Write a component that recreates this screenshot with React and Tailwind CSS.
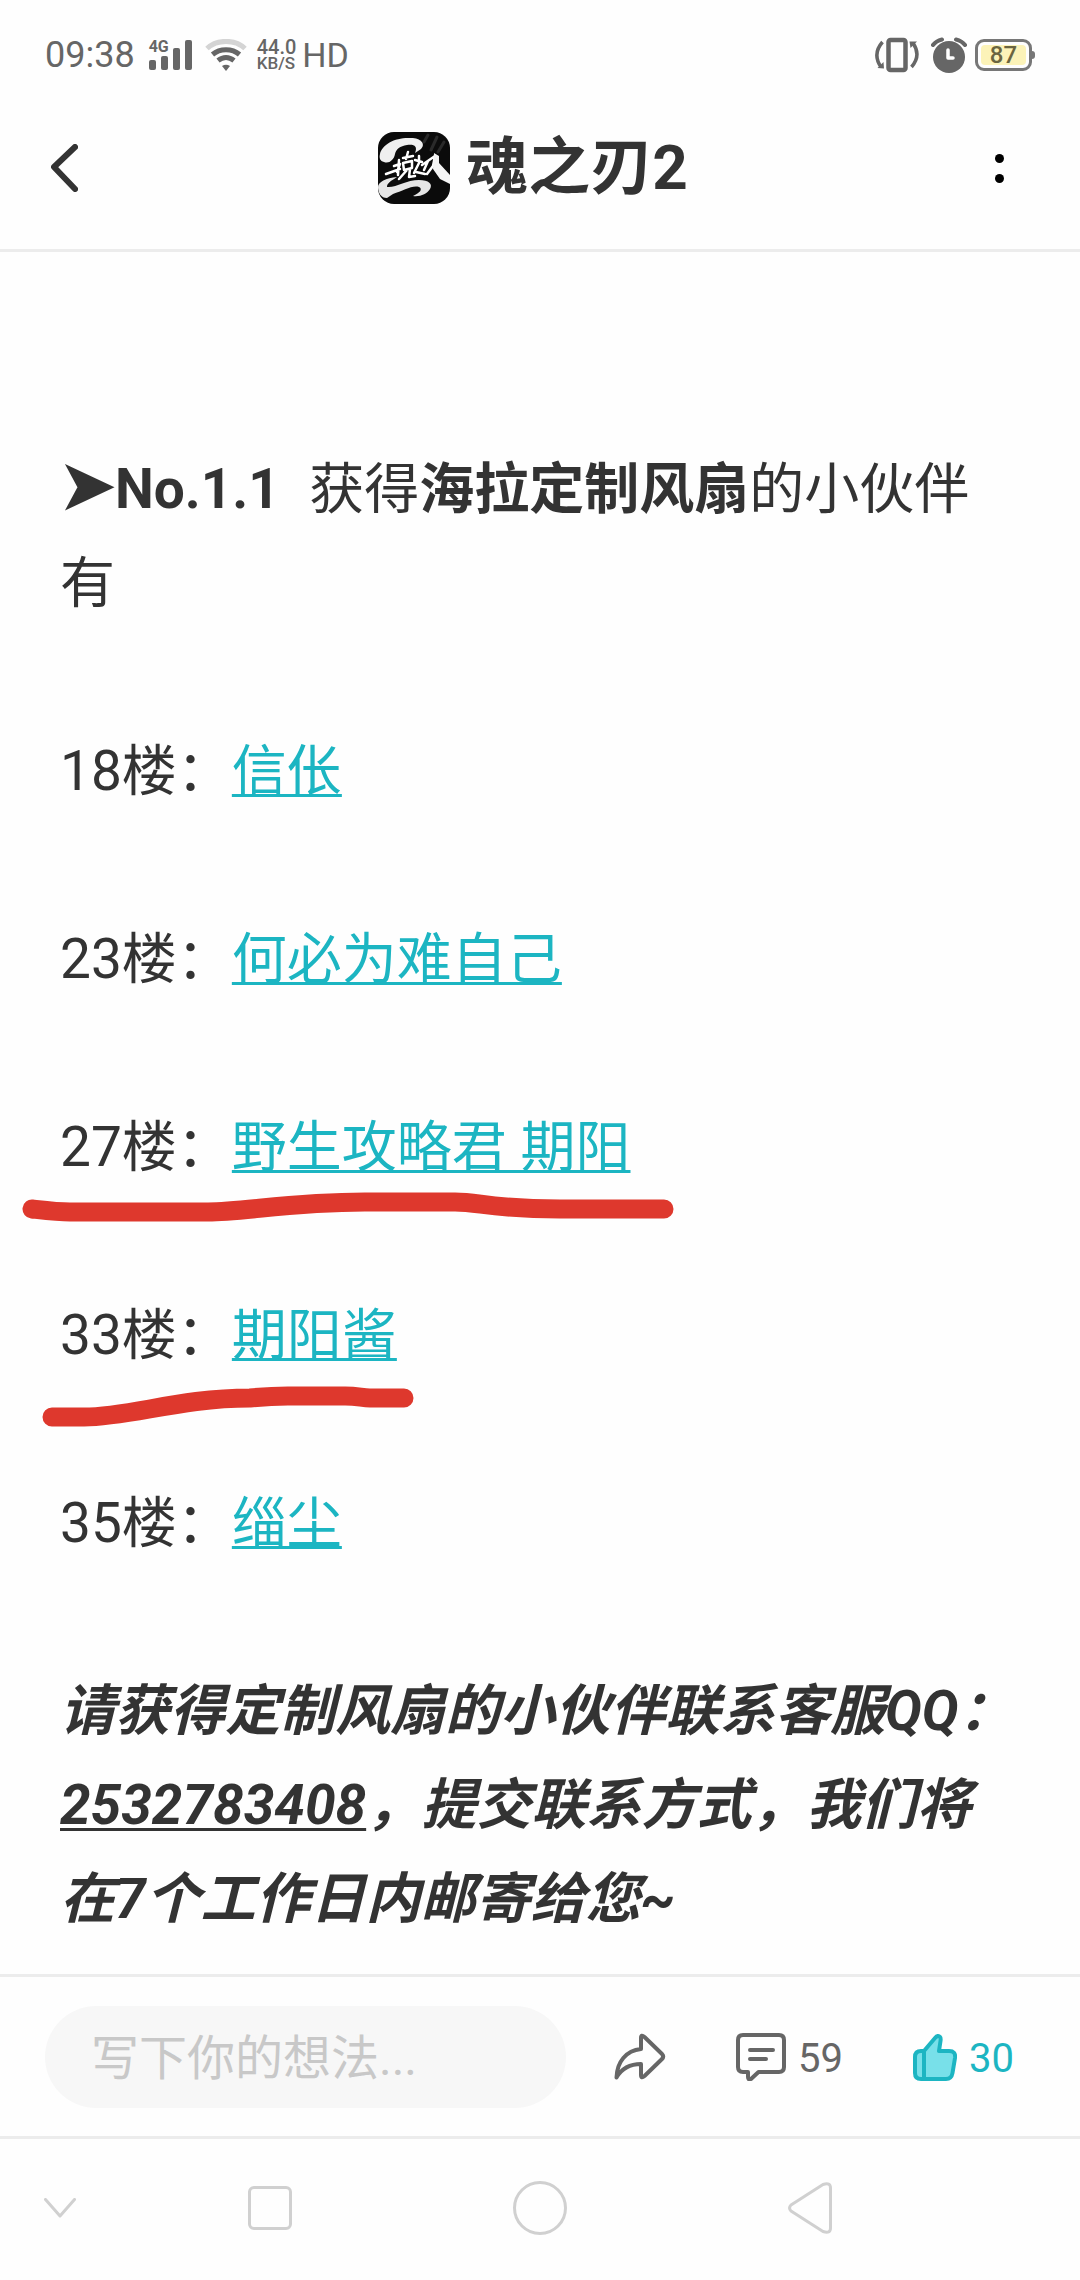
import React from 'react'

const winners = [
    { floor: 18, name: '信伥' },
    { floor: 23, name: '何必为难自己' },
    { floor: 27, name: '野生攻略君 期阳', mark: 'long' },
    { floor: 33, name: '期阳酱', mark: 'short' },
    { floor: 35, name: '缁尘' },
]

const StatusBar = () => (
    <div className="flex h-[86px] items-center justify-between px-[45px] pt-6 text-[#666]">
        <div className="flex items-center">
            <span className="text-4xl leading-10">09:38</span>
            <div className="relative ml-3.5">
                <svg className="block h-8 w-11" viewBox="0 0 44 32" fill="currentColor">
                    <rect x="0" y="21" width="7" height="10" rx="2" />
                    <rect x="12" y="17" width="7" height="14" rx="2" />
                    <rect x="24" y="9" width="7" height="22" rx="2" />
                    <rect x="36" y="1" width="7" height="30" rx="2" />
                </svg>
                <span className="absolute left-0 top-0 text-base leading-4 font-bold">4G</span>
            </div>
            <svg className="ml-3 h-8 w-[42px]" viewBox="0 0 42 32" fill="none" stroke="currentColor" strokeWidth="5">
                <path d="M2 9.500 C12 0 30 0 40 9.500" stroke="#d4d4d4" />
                <path d="M7.500 15.500 C15 9 27 9 34.500 15.500" />
                <path d="M13 21.500 C18 17.500 24 17.500 29 21.500" />
                <path d="M17 27 Q21 24.500 25 27 L21 32 Z" fill="currentColor" stroke="none" />
            </svg>
            <div className="ml-2.5 font-medium">
                <div className="text-xl leading-4">44.0</div>
                <div className="text-[17px] leading-4">KB/S</div>
            </div>
            <span className="ml-1.5 text-[34px] leading-10">HD</span>
        </div>
        <div className="flex items-center">
            <svg className="h-9 w-11" viewBox="0 0 44 36" fill="none" stroke="currentColor" strokeWidth="3.500">
                <rect x="13.500" y="3" width="17" height="30" rx="2" strokeWidth="4.500" />
                <path d="M7.500 5 C0.500 13 0.500 22 6 30" />
                <path d="M2.500 31 L9 31.500 L8.500 25 Z" fill="currentColor" stroke="none" />
                <path d="M36.500 30 C43.500 22 43.500 14 38 6" />
                <path d="M34.500 4.500 L42 4.500 L35.500 11 Z" fill="currentColor" stroke="none" />
            </svg>
            <svg className="ml-3 h-9 w-9" viewBox="0 0 36 36" fill="none">
                <circle cx="18" cy="20" r="16" fill="currentColor" />
                <path d="M2 8 Q5 4 11 2.500 M34 8 Q31 4 25 2.500" stroke="currentColor" strokeWidth="4" strokeLinecap="round" />
                <path d="M17 13 V21 H22" stroke="#fff" strokeWidth="3.500" strokeLinecap="round" strokeLinejoin="round" />
            </svg>
            <div className="ml-2 flex items-center">
                <div className="h-8 w-[57px] rounded-[9px] border-[3px] border-[#777] p-[3px]">
                    <div className="flex h-5 items-center justify-center rounded-sm bg-[#fcf3b8] text-2xl leading-5 font-medium text-[#6b6540]">87</div>
                </div>
                <div className="h-2 w-[3px] rounded-r-full bg-[#777]" />
            </div>
        </div>
    </div>
)

const GameLogo = () => (
    <svg className="h-[72px] w-[72px] rounded-2xl" viewBox="0 0 72 72" fill="none" strokeLinecap="round" strokeLinejoin="round">
        <rect width="72" height="72" fill="#0b0b0b" />
        <path d="M46 10 L50 3 M53 18 L59 5 M60 20 L66 10" stroke="#2a2a2a" strokeWidth="3" />
        {/* upper and lower brush sweeps */}
        <path d="M2 22 C4 12 18 5 33 6 C43 6 48 12 43 17 L37 21 C40 14 36 12 29 13 C22 14 18 17 17 22 C16 28 11 32 6 30 C2 29 1 26 2 22 Z" fill="#efefef" />
        <path d="M19 45 C13 49 9 51 9 55 C18 56 28 48 41 48 C51 48 55 52 52 57 C49 62 42 65 35 64 C42 61 45 57 41 55 C34 53 25 59 15 62 L9 66 C3 66 0 61 0 55 C0 50 8 46 19 45 Z" fill="#e6e6e6" />
        {/* lettering strokes */}
        <g stroke="#fff" strokeWidth="2.500">
            <path d="M8 42 L22 37 M16 34 L22 32 L19 40 M21 28 L20 43" />
            <path d="M25 26 L35 24 M30 20 L28 27 M25 31 L34 29 L34 36 L26 38 Z M29 38 L21 47 M32 37 L31 45 L37 44" />
            <path d="M37 28 L44 30 M41 24 L41 31 L36 41 M38 40 L47 42" />
            <path d="M44 33 L57 24 L55 34 L49 42 M50 29 L46 38" />
        </g>
        <path d="M56 21 L61 24 L61 31 L72 43 V52 L62 47 L55 37 Z" fill="#f4f4f4" />
    </svg>
)

const Header = () => (
    <header className="border-b-[3px] border-[#ececec]">
        <StatusBar />
        <div className="flex h-[163px] items-center justify-between pl-[51px] pr-[68px]">
            <button aria-label="返回">
                <svg className="block h-12 w-[27px]" viewBox="0 0 27 48" fill="none" stroke="#333" strokeWidth="6" strokeLinecap="round" strokeLinejoin="round">
                    <path d="M24 3 L3 23 L24 45" />
                </svg>
            </button>
            <div className="flex items-center gap-4">
                <GameLogo />
                <h1 className="text-[62px] leading-[72px] font-bold">魂之刃2</h1>
            </div>
            <button aria-label="更多" className="flex w-6 flex-col items-center gap-[11px] pt-0.5">
                <span className="h-[9px] w-[9px] rounded-full bg-black" />
                <span className="h-[9px] w-[9px] rounded-full bg-black" />
            </button>
        </div>
    </header>
)

// Hand-drawn highlight under a winner's row
const MarkerLine = ({ type }) => {
    if (type === 'long') {
        return (
            <svg className="absolute -left-10 top-[88px] h-10 w-[660px]" viewBox="0 0 660 40" fill="none" stroke="#de382d" strokeWidth="19" strokeLinecap="round">
                <path d="M12 21 C30 23 38 24 50 24 H188 C225 24 270 14 345 14 H435 C460 14 470 21 540 21 H644" />
            </svg>
        )
    }
    return (
        <svg className="absolute -left-10 top-[88px] h-[60px] w-[660px]" viewBox="0 0 660 60" fill="none" stroke="#de382d" strokeWidth="19" strokeLinecap="round">
            <path d="M32 41 H64 C110 41 160 22 230 22 C250 20 258 20 268 20 H325 C338 20 342 22 350 22 H384" />
        </svg>
    )
}

const Article = () => (
    <main className="flex-1 px-[60px] pt-[190px] pb-7 text-[55px] leading-[94px]">
        <p>
            <strong className="mr-0.5"><span className="text-[66px] leading-none">➤</span>No.1.1</strong>&nbsp; 获得<strong>海拉定制风扇</strong>的小伙伴有
        </p>
        {winners.map((item) => (
            <p key={item.floor} className="relative mt-[94px]">
                {item.floor}楼：
                <a href="#" className="text-[#1cb5c2] underline decoration-[3px] underline-offset-4 [text-decoration-skip-ink:none]">{item.name}</a>
                {item.mark && <MarkerLine type={item.mark} />}
            </p>
        ))}
        <p className="mt-[94px] font-bold italic">
            请获得定制风扇的小伙伴联系客服QQ：
            <span className="underline decoration-[3px] underline-offset-4 [text-decoration-skip-ink:none]">2532783408</span>
            ，提交联系方式，我们将在7个工作日内邮寄给您~
        </p>
    </main>
)

const CommentBar = () => (
    <div className="flex h-[165px] items-center border-y-[3px] border-[#ececec] pl-[45px] pr-[66px] text-[40px] leading-[48px] text-[#666]">
        <input
            type="text"
            aria-label="写下你的想法"
            placeholder="写下你的想法..."
            className="h-[102px] min-w-0 flex-1 rounded-full bg-[#f7f7f7] px-[46px] pt-1 text-5xl outline-none placeholder:text-[#c8c8c8]"
        />
        <button aria-label="分享" className="ml-12">
            <svg className="block h-12 w-[52px]" viewBox="0 0 52 48" fill="none" stroke="currentColor" strokeWidth="4" strokeLinecap="round" strokeLinejoin="round">
                <path d="M27 16 V5 Q27 1 30.500 4 L48 21 Q50.500 23.500 48 26 L30.500 43 Q27 46 27 42 V31 C16 31 8 35 2.500 44.500 C3 29 12 17.500 27 16 Z" />
            </svg>
        </button>
        <button aria-label="评论" className="ml-[70px] flex items-center gap-3">
            <svg className="h-12 w-[50px]" viewBox="0 0 50 48" fill="none" stroke="currentColor" strokeWidth="4" strokeLinecap="round" strokeLinejoin="round">
                <path d="M7 2 H43 Q48 2 48 7 V34 Q48 39 43 39 H22.500 L15 46 Q12 47.500 12 44 V39 H7 Q2 39 2 34 V7 Q2 2 7 2 Z" />
                <path d="M14 17 H37 M14 26 H30" />
            </svg>
            <span className="pt-1">59</span>
        </button>
        <button aria-label="点赞" className="ml-[70px] flex items-center gap-3 text-[#1cb5c2]">
            <svg className="h-12 w-11" viewBox="0 0 44 48" fill="#78e0e9" stroke="currentColor" strokeWidth="4" strokeLinecap="round" strokeLinejoin="round">
                <path d="M11 18 L22 5 Q25 1.500 27 4 Q28 5 27.500 8 L26 18 H36 Q43 18 42 25 L39.500 40 Q38.500 46 33 46 H8 Q2 46 2 40 V24 Q2 18 8 18 Z" />
                <path d="M11 18 V46" />
            </svg>
            <span className="pt-1">30</span>
        </button>
    </div>
)

const SystemNav = () => (
    <nav className="grid h-[141px] grid-cols-[1fr_2fr_2fr_2fr_1fr] items-center pb-1 text-[#d0d0d0]">
        <button aria-label="收起" className="pl-11">
            <svg className="block h-5 w-8" viewBox="0 0 32 20" fill="none" stroke="currentColor" strokeWidth="3" strokeLinecap="round" strokeLinejoin="round">
                <path d="M1.500 1.500 L16 18 L30.500 1.500" />
            </svg>
        </button>
        <button aria-label="最近任务" className="mx-auto h-11 w-11 rounded-md border-[3px]" />
        <button aria-label="主页" className="mx-auto h-[54px] w-[54px] rounded-full border-[3px]" />
        <button aria-label="后退" className="mx-auto">
            <svg className="block h-[52px] w-11" viewBox="0 0 44 52" fill="none" stroke="currentColor" strokeWidth="3" strokeLinejoin="round">
                <path d="M3 23 L35 2.500 Q42.500 0 42.500 6 V46 Q42.500 52 35 49.500 L3 29 Q0 26 3 23 Z" />
            </svg>
        </button>
    </nav>
)

const App = () => {
    return (
        <div lang="zh-CN" className="flex min-h-screen flex-col bg-[#fefefe] font-['Roboto','Noto_Sans_CJK_SC',sans-serif] text-[#333]">
            <Header />
            <Article />
            <footer>
                <CommentBar />
                <SystemNav />
            </footer>
        </div>
    )
}

export default App
